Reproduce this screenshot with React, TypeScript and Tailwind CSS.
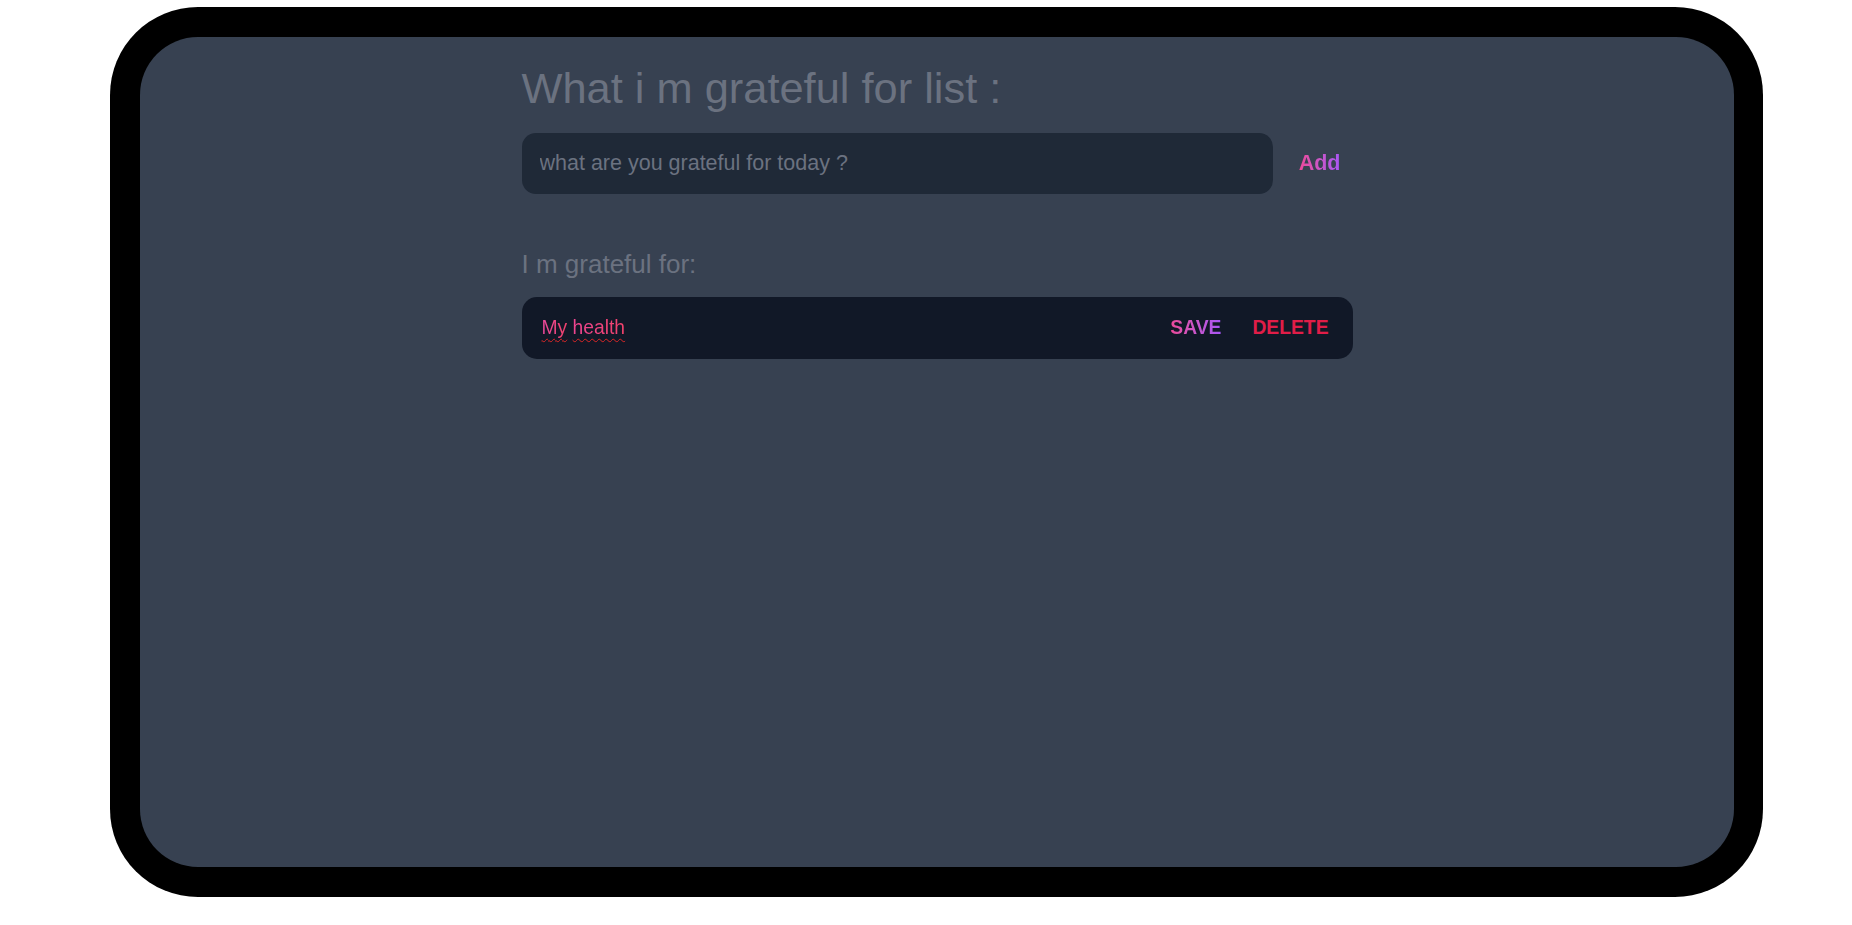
export default function App() {
  return (
    <div className="min-h-[925px] w-full bg-white pt-[7px] font-['Liberation_Sans',Arial,sans-serif]">
      <div className="ml-[110px] h-[890px] w-[1653px] rounded-[88px] bg-black p-[30px] pr-[29px]">
        <div className="h-full rounded-[58px] bg-[#374151] pt-[25px]">
          <div className="mx-auto w-[831px]">
            <h1 className="text-[43.4px] leading-[52px] text-[#6b7280]">
              What i m grateful for list :
            </h1>

            <div className="mt-[19px] flex items-center">
              <input
                type="text"
                placeholder="what are you grateful for today ?"
                className="h-[61px] flex-1 rounded-[14px] bg-[#1f2937] px-[18px] text-[21.5px] text-gray-300 outline-none placeholder:text-[#6b7280]"
              />
              <button
                type="button"
                className="pl-[26px] pr-[12px] text-[21.5px] font-bold"
              >
                <span className="bg-linear-to-r from-[#ec4899] to-[#a855f7] bg-clip-text text-transparent">
                  Add
                </span>
              </button>
            </div>

            <h2 className="mt-[54px] text-[26px] leading-[32px] text-[#6b7280]">
              I m grateful for:
            </h2>

            <ul className="mt-[17px]">
              <li className="flex h-[62px] items-center rounded-[15px] bg-[#111827] pl-[20px] pr-[24px]">
                <span className="flex-1 text-[19.3px]">
                  <span className="bg-linear-to-r from-[#e8489b] to-[#f0416a] bg-clip-text text-transparent underline decoration-[#dc2626] decoration-wavy decoration-1 underline-offset-[4px]">
                    My
                  </span>{" "}
                  <span className="bg-linear-to-r from-[#ee4590] to-[#f0416a] bg-clip-text text-transparent underline decoration-[#dc2626] decoration-wavy decoration-1 underline-offset-[4px]">
                    health
                  </span>
                </span>
                <div className="flex items-center gap-[31px] text-[19.3px] font-bold">
                  <button type="button">
                    <span className="bg-linear-to-r from-[#ec4899] to-[#a855f7] bg-clip-text text-transparent">
                      SAVE
                    </span>
                  </button>
                  <button type="button" className="text-[#e11d48]">
                    DELETE
                  </button>
                </div>
              </li>
            </ul>
          </div>
        </div>
      </div>
    </div>
  );
}
